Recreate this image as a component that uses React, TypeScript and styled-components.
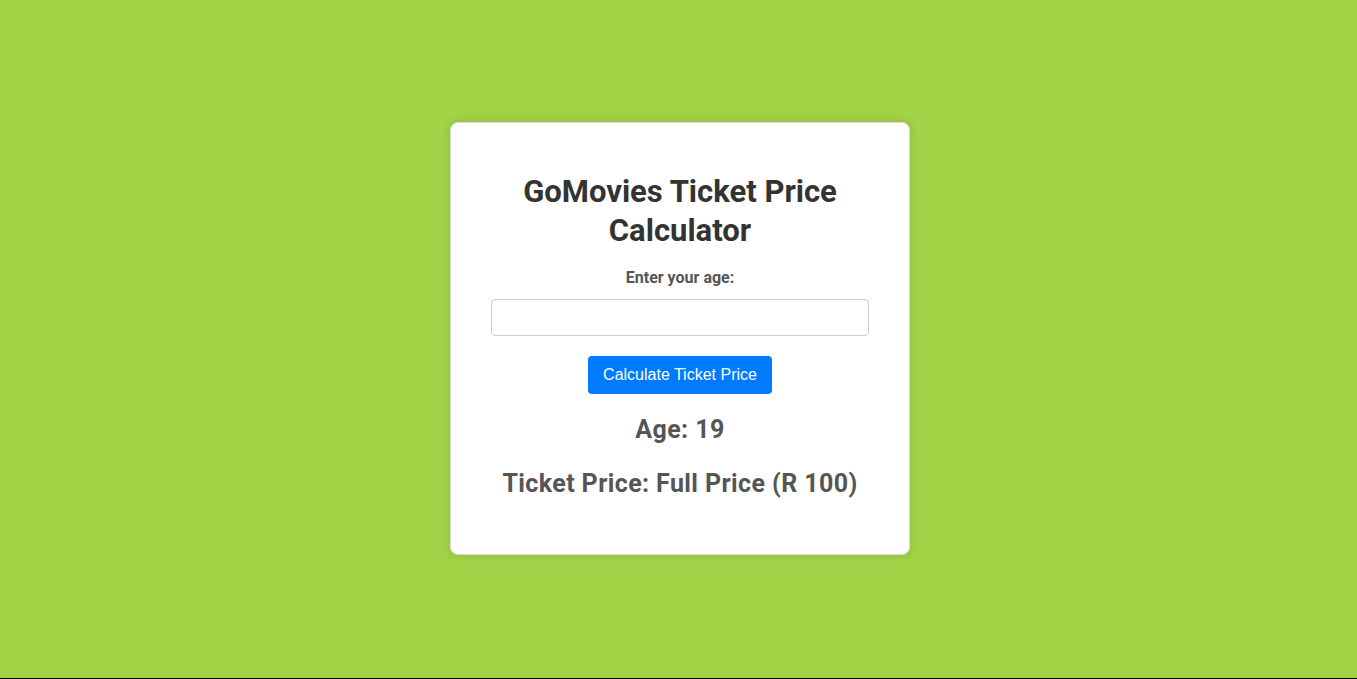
import React, { useState } from "react";
import styled, { createGlobalStyle } from "styled-components";

const GlobalStyle = createGlobalStyle`
  html, body {
    margin: 0;
    padding: 0;
    background: #a2d246;
  }
  body {
    font-family: Roboto, "Liberation Sans", sans-serif;
  }
`;

function App() {
  const [age, setAge] = useState("");
  const [shown, setShown] = useState(19);

  const priceFor = (n: number) => {
    if (n < 12) return "Child Price (R 50)";
    if (n >= 65) return "Senior Price (R 60)";
    return "Full Price (R 100)";
  };

  return (
    <Page>
      <GlobalStyle />
      <Card>
        <Title>GoMovies Ticket Price Calculator</Title>
        <Label htmlFor="age">Enter your age:</Label>
        <AgeInput
          id="age"
          type="number"
          value={age}
          onChange={(e) => setAge(e.target.value)}
        />
        <CalcButton
          onClick={() => {
            const n = parseInt(age, 10);
            if (!isNaN(n)) setShown(n);
          }}
        >
          Calculate Ticket Price
        </CalcButton>
        <Result $top={21}>Age: {shown}</Result>
        <Result $top={24}>Ticket Price: {priceFor(shown)}</Result>
      </Card>
    </Page>
  );
}

export default App;

const Page = styled.div`
  height: 677px;
  padding: 0 0 1px 3px;
  border-bottom: 1px solid #000;
  display: flex;
  align-items: center;
  justify-content: center;
`;

const Card = styled.div`
  width: 378px;
  padding: 40px;
  background: #fff;
  border: 1px solid #dcdcdc;
  border-radius: 8px;
  box-shadow: 0 0 10px rgba(0, 0, 0, 0.12);
  text-align: center;
  display: flex;
  flex-direction: column;
  align-items: center;
`;

const Title = styled.h1`
  margin: 9px 0 18px;
  font-size: 31px;
  line-height: 39px;
  font-weight: 700;
  color: #333;
`;

const Label = styled.label`
  font-size: 16px;
  line-height: 20px;
  font-weight: 700;
  color: #555;
`;

const AgeInput = styled.input`
  box-sizing: border-box;
  width: 100%;
  height: 37px;
  margin-top: 11px;
  padding: 8px 10px;
  border: 1px solid #ccc;
  border-radius: 4px;
  font-size: 16px;
  outline: none;
`;

const CalcButton = styled.button`
  margin-top: 20px;
  height: 38px;
  padding: 0 15px;
  border: none;
  border-radius: 4px;
  background: #007bff;
  color: #fff;
  font-family: "Liberation Sans", Arial, sans-serif;
  font-size: 16px;
  cursor: pointer;
`;

const Result = styled.h2<{ $top: number }>`
  margin: ${(p) => p.$top}px 0 0;
  font-size: 25px;
  line-height: 30px;
  letter-spacing: 0.4px;
  font-weight: 700;
  color: #555;

  &:last-child {
    margin-bottom: 15px;
  }
`;
